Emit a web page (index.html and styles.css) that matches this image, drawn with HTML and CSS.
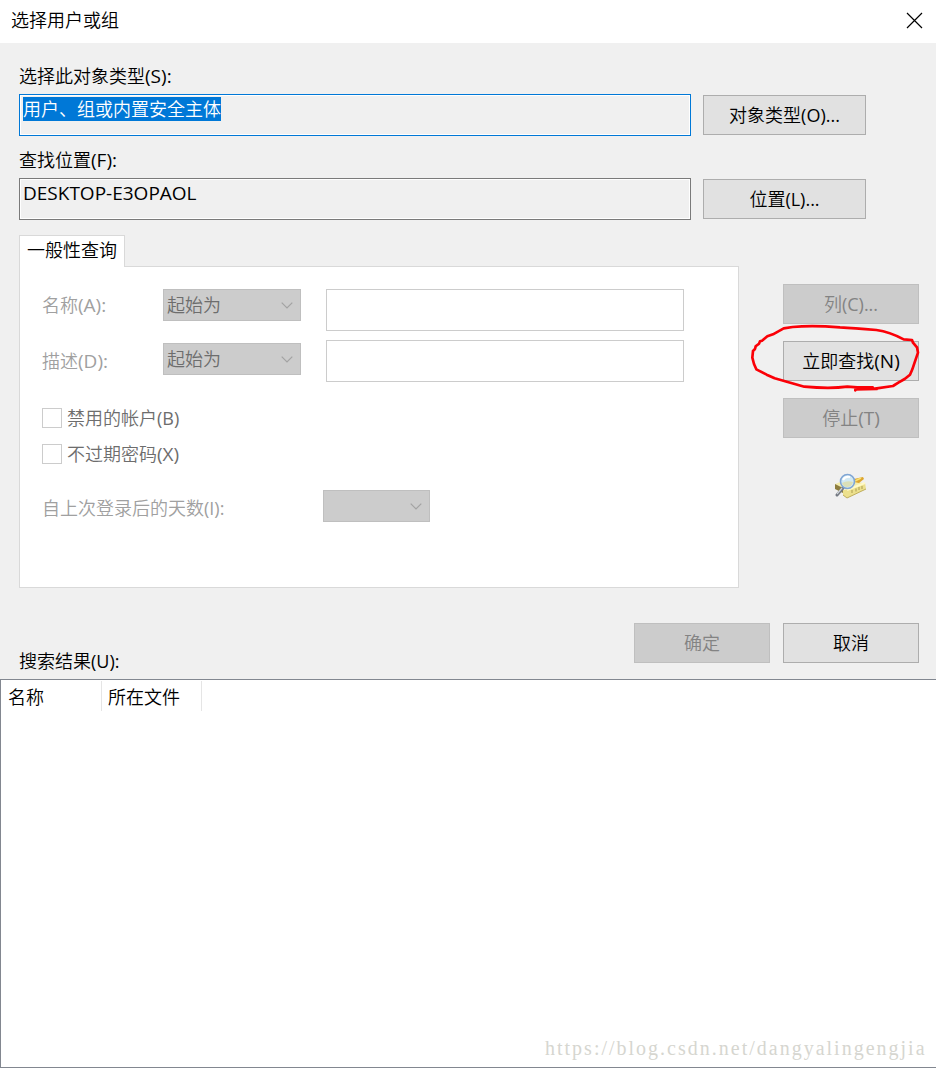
FILE: index.html
```html
<!DOCTYPE html>
<html lang="zh-CN">
<head>
<meta charset="utf-8">
<title>选择用户或组</title>
<link rel="stylesheet" href="styles.css">
</head>
<body>
<div class="dialog">
  <header class="titlebar">
    <span>选择用户或组</span>
    <svg class="close" width="17" height="17" viewBox="0 0 17 17"><path d="M1 1L16 16M16 1L1 16"/></svg>
  </header>
  <main class="content">
    <div class="label">选择此对象类型<span class="key">(S):</span></div>
    <div class="row">
      <div class="field focused"><span class="selection">用户、组或内置安全主体</span></div>
      <button class="btn wide">对象类型(O)...</button>
    </div>
    <div class="label second">查找位置<span class="key">(F):</span></div>
    <div class="row">
      <div class="field"><span class="value">DESKTOP-E3OPAOL</span></div>
      <button class="btn wide">位置(L)...</button>
    </div>
    <div class="middle">
      <section class="tabs">
        <div class="tab">一般性查询</div>
        <div class="panel">
          <div class="query">
            <span class="off name">名称<span class="key">(A):</span></span>
            <div class="combo">起始为<svg width="12" height="7" viewBox="0 0 12 7"><path d="M.7.7L6 6L11.3.7"/></svg></div>
            <div class="input"></div>
          </div>
          <div class="query next">
            <span class="off desc">描述<span class="key">(D):</span></span>
            <div class="combo low">起始为<svg width="12" height="7" viewBox="0 0 12 7"><path d="M.7.7L6 6L11.3.7"/></svg></div>
            <div class="input"></div>
          </div>
          <div class="check first"><i class="box"></i><span>禁用的帐户(B)</span></div>
          <div class="check"><i class="box"></i><span>不过期密码<span class="key">(X)</span></span></div>
          <div class="days">
            <span class="off">自上次登录后的天数(I):</span>
            <div class="combo small"><svg width="12" height="7" viewBox="0 0 12 7"><path d="M.7.7L6 6L11.3.7"/></svg></div>
          </div>
        </div>
      </section>
      <aside class="side">
        <button class="btn disabled">列(C)...</button>
        <div class="find">
          <button class="btn"><span>立即查找<span class="key">(N)</span></span></button>
          <svg class="circle" width="196" height="130" viewBox="0 0 588 390"><path d="M346 358L411 357M346 361Q352 352 380 355L405 356L459 348L475 338L494 327L510 314L517 298L524 277L534 248L531 232L519 218L516 210L491 208Q450 186 409 180Q340 174 300 172Q215 165 158 171L131 175L99 193L82 199L66 212L60 214L57 221L47 229L45 237L39 243L37 263L42 282L49 298L80 314L104 325L151 338L193 350Q270 357 322 350L352 352L398 352"/></svg>
        </div>
        <button class="btn disabled"><span>停止<span class="key">(T)</span></span></button>
        <svg class="search" width="34" height="28" viewBox="0 0 34 28">
          <path d="M1 11L14 6L32 11L14 18Z" fill="#f4ecab"/>
          <path d="M1 11L9 15V20L1 16Z" fill="#8d7d3e"/>
          <path d="M20 6L29 4L30 6L25 10L20 9Z" fill="#dda52d"/>
          <path d="M21 8L27 5" stroke="#fae274" stroke-width="1.5"/>
          <path d="M13 17L31 10L32 16L13 25L9 22V17Z" fill="#ece08d"/>
          <path d="M13 17L31 10" stroke="#fff9c7" stroke-width="2"/>
          <path d="M9 22L13 25L32 16" stroke="#bfae5d" fill="none"/>
          <path d="M18 17v3M22 15.5v3M25 14v3M28 13v3" stroke="#ab9c50"/>
          <path d="M9 15L3 22" stroke="#747982" stroke-width="3" stroke-linecap="round"/>
          <path d="M8 15L3 21" stroke="#d0d4d8" stroke-width="1.2"/>
          <circle cx="13.5" cy="8.5" r="7" fill="#d2e9f3" stroke="#7fa5d4" stroke-width="1.6"/>
          <path d="M8 10Q13 7 19 9Q18 14 13 14Q9 14 8 10Z" fill="#dadfb8"/>
          <path d="M9 7Q11 3 16 4" stroke="#fff" stroke-width="2" fill="none"/>
        </svg>
      </aside>
    </div>
    <footer class="actions">
      <div class="label results">搜索结果(U):</div>
      <button class="btn disabled">确定</button>
      <button class="btn">取消</button>
    </footer>
  </main>
  <section class="list">
    <div class="head"><span>名称</span><span>所在文件</span></div>
    <div class="watermark">https://blog.csdn.net/dangyalingengjia</div>
  </section>
</div>
</body>
</html>
```
FILE: styles.css
```css
* { box-sizing: border-box; }
body { margin: 0; }
.dialog {
  width: 936px; height: 1068px; overflow: hidden;
  display: flex; flex-direction: column;
  background: #f0f0f0; color: #000;
  font: 18px/24px "Open Sans", "Noto Sans CJK SC DemiLight", "Noto Sans CJK SC", sans-serif;
}
.titlebar {
  height: 43px; flex: none; padding: 0 13px 3px 11px; background: #fff;
  display: flex; align-items: center; justify-content: space-between;
}
.close path { fill: none; stroke: #000; stroke-width: 1.2; }
.content { height: 636px; flex: none; padding: 21px 17px 0 19px; }
.label { height: 24px; margin-bottom: 6px; white-space: nowrap; }
.key { font-size: 19px; line-height: 20px; }
.second { margin-top: 12px; }
.row { display: flex; gap: 12px; align-items: center; height: 42px; }
.field {
  width: 672px; height: 42px; padding: 2px 3px; border: 1px solid #7a7a7a;
  box-shadow: inset 0 0 0 1px #fff; display: flex; align-items: flex-start;
}
.value { font-size: 19px; }
.focused { border-color: #0078d7; }
.selection { background: #0078d7; color: #fff; height: 24px; }
.btn {
  display: flex; align-items: center; justify-content: center;
  width: 136px; height: 40px; padding: 0; flex: none;
  font: inherit; color: #000; background: #e1e1e1; border: 1px solid #adadad;
}
.wide { width: 163px; }
.disabled { color: #838383; background: #ccc; border-color: #bfbfbf; }
.middle { display: flex; justify-content: space-between; margin-top: 15px; }
.tabs { width: 720px; }
.tab {
  position: relative; width: 106px; height: 32px; margin-bottom: -1px; padding: 2px 7px;
  background: #fff; border: 1px solid #d9d9d9; border-bottom: 0; white-space: nowrap;
}
.panel { height: 322px; background: #fff; border: 1px solid #d9d9d9; padding: 22px 54px 0 22px; }
.query { display: flex; height: 42px; }
.next { margin-top: 9px; }
.off { color: #a0a0a0; width: 121px; white-space: nowrap; }
.name { padding-top: 4px; }
.desc { padding-top: 9px; }
.combo {
  width: 138px; height: 32px; margin-right: 25px; padding: 0 7px 0 3px;
  display: flex; align-items: center; justify-content: space-between;
  color: #6d6d6d; background: #ccc; border: 1px solid #bfbfbf;
}
.combo path { fill: none; stroke: #a3a3a3; stroke-width: 1.2; }
.low { margin-top: 3px; }
.input { width: 358px; height: 42px; border: 1px solid #ccc; background: #fff; }
.check { display: flex; align-items: center; gap: 5px; height: 20px; margin-top: 16px; color: #6d6d6d; }
.first { margin-top: 26px; }
.box { width: 20px; height: 20px; border: 1px solid #ccc; }
.days { display: flex; align-items: center; height: 32px; margin-top: 26px; }
.days .off { width: 281px; padding-top: 3px; }
.small { width: 107px; justify-content: flex-end; margin: 0; }
.side { width: 136px; padding-top: 49px; display: flex; flex-direction: column; gap: 17px; }
.find { position: relative; }
.circle { position: absolute; left: -43px; top: -71px; z-index: 2; pointer-events: none; }
.circle path { fill: none; stroke: #fb0007; stroke-width: 8; stroke-linejoin: round; stroke-linecap: round; }
.search { margin: 18px 0 0 51px; }
.actions { display: flex; gap: 13px; margin-top: 35px; }
.results { flex: 1; margin: 26px 0 0; }
.list {
  flex: 1; background: #fff; border: 1px solid #828790; border-right: 0;
  display: flex; flex-direction: column; justify-content: space-between;
}
.head { display: flex; padding-top: 1px; }
.head span { width: 100px; height: 30px; padding: 4px 0 0 6px; border-right: 1px solid #e5e5e5; }
.head span:first-child { width: 101px; padding-left: 7px; }
.watermark {
  align-self: flex-end; margin: 0 10px 7px 0; width: 381px; white-space: nowrap;
  font: 20px/24px "Liberation Serif", serif; letter-spacing: 2px; color: #d6d6d0;
}
```
